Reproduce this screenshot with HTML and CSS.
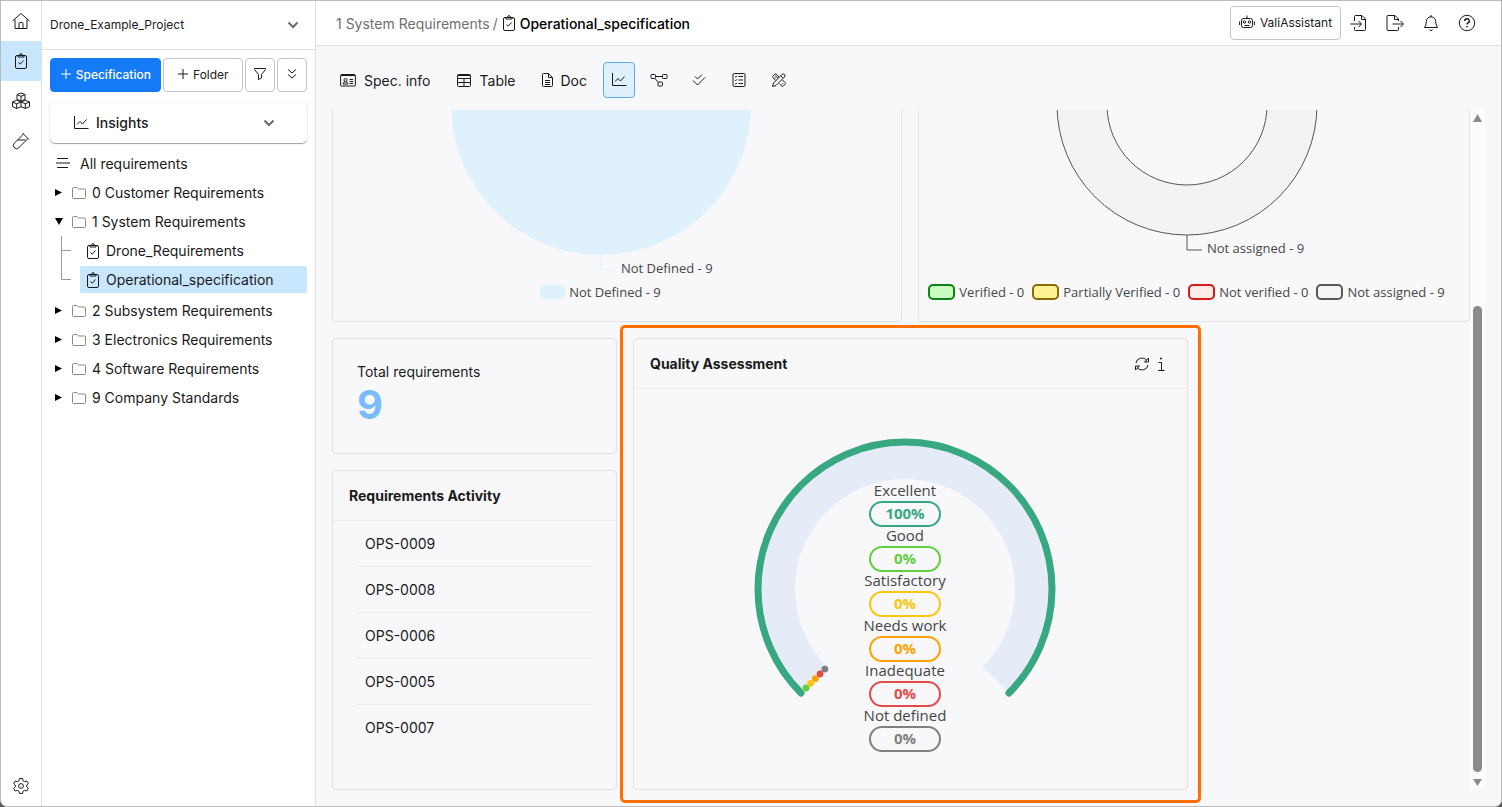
FILE: index.html
```html
<!DOCTYPE html>
<html lang="en">
<head>
    <meta charset="UTF-8">
    <meta name="viewport" content="width=device-width, initial-scale=1">
    <title>Operational_specification</title>
    <link rel="stylesheet" href="styles.css">
</head>
<body>
    <!-- icon sprite -->
    <svg class="sprite" aria-hidden="true">
        <symbol id="i-home" viewBox="0 0 18 18"><path d="M.500 9 9 1.500 17.500 9M3 7.500V16.500H15V7.500M7 16.500V11.500Q7 10.500 8 10.500H10Q11 10.500 11 11.500V16.500"/></symbol>
        <symbol id="i-clip" viewBox="0 0 16 16"><rect x="2.500" y="2.500" width="11" height="13" rx="1.500"/><path d="M5 4V2.500H6.500Q6.700.600 8 .600T9.500 2.500H11V4ZM5.500 9.500 7.200 11.200 10.500 7.500"/></symbol>
        <symbol id="i-boxes" viewBox="0 0 18 18"><path d="M9 1 13 2.500V7.500L9 9 5 7.500V2.500ZM5 2.700 9 4.300 13 2.700M9 4.300V8.700M4.700 8.200 9 10V14.700L4.700 16.500 .500 14.700V10ZM.500 10 4.700 11.800 9 10M4.700 11.800V16.500M13.300 8.200 17.500 10V14.700L13.300 16.500 9 14.700M9 10 13.300 8.200M9 10 13.300 11.800 17.500 10M13.300 11.800V16.500"/></symbol>
        <symbol id="i-tube" viewBox="0 0 18 18"><path d="M10.500 1 17 7.500M11.500 2 2.300 11.200A3.100 3.100 0 0 0 6.800 15.700L16 6.500M5.800 8H13.500"/></symbol>
        <symbol id="i-gear" viewBox="0 0 18 18"><circle cx="9" cy="9" r="2.400"/><path d="M7.500 1.500H10.500L11 3.700 12.600 4.600 14.800 4 16.300 6.600 14.700 8.100V9.900L16.300 11.400 14.800 14 12.600 13.400 11 14.300 10.500 16.500H7.500L7 14.300 5.400 13.400 3.200 14 1.700 11.400 3.300 9.900V8.100L1.700 6.600 3.200 4 5.400 4.600 7 3.700Z" stroke-linejoin="round"/></symbol>
        <symbol id="i-down" viewBox="0 0 12 8"><path d="M1.500 1.500 6 6 10.500 1.500" stroke-width="2"/></symbol>
        <symbol id="i-plus" viewBox="0 0 12 12"><path d="M6 1V11M1 6H11"/></symbol>
        <symbol id="i-filter" viewBox="0 0 14 14"><path d="M1.500 1.500H12.500V2.500L8.500 7.500V11L5.500 12.500V7.500L1.500 2.500Z"/></symbol>
        <symbol id="i-ddown" viewBox="0 0 14 14"><path d="M3 2.500 7 6 11 2.500M3 7.500 7 11 11 7.500"/></symbol>
        <symbol id="i-chart" viewBox="0 0 16 16"><path d="M1.500 1V13.500H15.500M4 9.500 7 6.500 9.500 9 13.500 4.500"/></symbol>
        <symbol id="i-lines" viewBox="0 0 14 12"><path d="M1 1.500H12M0 6H14M1 10.500H12"/></symbol>
        <symbol id="i-folder" viewBox="0 0 16 16"><path d="M1.500 3.500Q1.500 2.500 2.500 2.500H6L7.500 4H13.500Q14.500 4 14.500 5V12.500Q14.500 13.500 13.500 13.500H2.500Q1.500 13.500 1.500 12.500Z"/></symbol>
        <symbol id="i-right" viewBox="0 0 8 8"><path d="M0 0 7 3.500 0 7Z" fill="#000" stroke="none"/></symbol>
        <symbol id="i-open" viewBox="0 0 8 8"><path d="M0 0H8L4 7Z" fill="#000" stroke="none"/></symbol>
        <symbol id="i-mid" viewBox="0 0 10 29"><path d="M.500 0V29M.500 14.500H10"/></symbol>
        <symbol id="i-end" viewBox="0 0 10 29"><path d="M.500 0V14.500H10"/></symbol>
        <symbol id="i-robot" viewBox="0 0 16 16"><rect x="2.500" y="4.500" width="11" height="9" rx="2"/><path d="M8 1.500V4.500M.600 7.500V11M15.400 7.500V11M5.500 11.500H10.500"/><circle cx="5.500" cy="8" r="1.200"/><circle cx="10.500" cy="8" r="1.200"/></symbol>
        <symbol id="i-import" viewBox="0 0 18 18"><path d="M4.500 7V2.500Q4.500 1.500 5.500 1.500H12L15.500 5V15.500Q15.500 16.500 14.500 16.500H5.500Q4.500 16.500 4.500 15.500V13M11.500 1.500V5.500H15.500M.500 10H11.500M8.500 7 11.500 10 8.500 13"/></symbol>
        <symbol id="i-export" viewBox="0 0 18 18"><path d="M12.500 7V5L9 1.500H2Q1 1.500 1 2.500V15.500Q1 16.500 2 16.500H11.500Q12.500 16.500 12.500 15.500V13M8.500 1.500V5.500H12.500M6.500 10H17M14.500 7 17.500 10 14.500 13"/></symbol>
        <symbol id="i-bell" viewBox="0 0 18 18"><path d="M2.500 13.500Q4.300 11.500 4.300 7.500A4.700 4.700 0 0 1 13.700 7.500Q13.700 11.500 15.500 13.500ZM9 1V3M7.200 15.500A1.900 1.500 0 0 0 10.800 15.500"/></symbol>
        <symbol id="i-help" viewBox="0 0 18 18"><circle cx="9" cy="9" r="7.700"/><path d="M6.700 7A2.300 2.200 0 1 1 9.700 9.100Q9 9.500 9 10.600M9 12V13.400" stroke-width="1.400"/></symbol>
        <symbol id="i-card" viewBox="0 0 16 16"><rect x=".600" y="2.500" width="14.800" height="11.500" rx="1"/><path d="M1 3.500H15M9.500 7.500H13M9.500 9.500H13M9.500 11.500H13M3 12Q3.300 9.800 5.500 9.800T8 12Z"/><circle cx="5.500" cy="8" r="1.500"/></symbol>
        <symbol id="i-table" viewBox="0 0 16 16"><rect x="1.500" y="2.500" width="13" height="12" rx="1.200"/><path d="M1.500 3.500H14.500M1.500 6.500H14.500M1.500 10.500H14.500M8 6.500V14.500"/></symbol>
        <symbol id="i-doc" viewBox="1 0 16 16"><path d="M3.500 1.500H8.500L12.500 5.500V13.500Q12.500 14.500 11.500 14.500H3.500Q2.500 14.500 2.500 13.500V2.500Q2.500 1.500 3.500 1.500ZM8.500 1.500V5.500H12.500M5 8.500H10M5 10.500H10M5 12.500H10"/></symbol>
        <symbol id="i-nodes" viewBox="0 0 18 16"><rect x="1" y="2.500" width="4.500" height="4" rx=".800"/><rect x="12.500" y="2.500" width="4.500" height="4" rx=".800"/><rect x="8" y="10" width="4.500" height="4" rx=".800"/><path d="M5.500 4.500H12.500M5 6.500 8.500 10.500"/></symbol>
        <symbol id="i-checks" viewBox="0 0 16 16"><path d="M4 4.500 6.500 7 11 2.500M2 8.500 6.500 13 14 5.500"/></symbol>
        <symbol id="i-list" viewBox="0 0 16 16"><rect x="2" y="1.500" width="12" height="13" rx="1.200"/><path d="M7.500 4.500H12M7.500 8H12M7.500 11.500H12M4 4.500 4.800 5.200 6 3.800M4 8 4.800 8.700 6 7.300M4 11.500 4.800 12.200 6 10.800"/></symbol>
        <symbol id="i-tools" viewBox="0 0 16 16"><path d="M1.500 14.500 2.500 11 10.800 2.700Q12.300 1.200 13.500 2.500T13.300 5.200L5 13.500ZM10 4 12 6M7 6.300 4.200 3.500M4.800 8.500 1.800 5.500Q1.200 4.800 1.800 4.200L3.900 2.100Q4.500 1.500 5.200 2.100L8 5M3.200 6.500 4.500 5.200M8.500 12 11 14.300Q11.500 14.800 12.200 14.200L14.200 12.200Q14.800 11.500 14.200 10.800L11.500 8M11 12.500 12.300 11.200"/></symbol>
        <symbol id="i-refresh" viewBox="0 0 16 16"><path d="M2 7A6 5.500 0 0 1 13 4.500M14 9A6 5.500 0 0 1 3 11.500M14.500 2V6H10.500ZM1.500 14V10H5.500Z"/></symbol>
        <symbol id="i-info" viewBox="0 0 8 16"><path d="M1.500 6.500H4.500V14.500M1 14.500H7.500"/><circle cx="4" cy="2.500" r="1" fill="currentColor" stroke="none"/></symbol>
    </svg>

    <div class="app">
        <nav class="rail">
            <a href="#" aria-label="Home"><svg class="ic18"><use href="#i-home"/></svg></a>
            <a href="#" class="active" aria-label="Requirements"><svg class="ic16"><use href="#i-clip"/></svg></a>
            <a href="#" aria-label="Components"><svg class="ic18"><use href="#i-boxes"/></svg></a>
            <a href="#" aria-label="Tests"><svg class="ic18"><use href="#i-tube"/></svg></a>
            <a href="#" class="rail-bottom" aria-label="Settings"><svg class="ic18"><use href="#i-gear"/></svg></a>
        </nav>

        <aside class="sidebar">
            <div class="project">
                <select aria-label="Project">
                    <option>Drone_Example_Project</option>
                </select>
                <svg class="chevron"><use href="#i-down"/></svg>
            </div>
            <div class="side-actions">
                <button class="btn primary"><svg class="ic12"><use href="#i-plus"/></svg>Specification</button>
                <button class="btn folder-btn"><svg class="ic12"><use href="#i-plus"/></svg>Folder</button>
                <button class="btn small" aria-label="Filter"><svg class="ic14"><use href="#i-filter"/></svg></button>
                <button class="btn small" aria-label="Expand all"><svg class="ic14"><use href="#i-ddown"/></svg></button>
            </div>
            <button class="insights">
                <svg class="ic16"><use href="#i-chart"/></svg>
                <span>Insights</span>
                <svg class="chevron"><use href="#i-down"/></svg>
            </button>
            <a href="#" class="all-req"><svg class="lines"><use href="#i-lines"/></svg>All requirements</a>
            <ul class="tree">
                <li><a href="#" class="row"><svg class="tri"><use href="#i-right"/></svg><svg class="ic16 folder"><use href="#i-folder"/></svg>0 Customer Requirements</a></li>
                <li>
                    <a href="#" class="row"><svg class="tri"><use href="#i-open"/></svg><svg class="ic16 folder"><use href="#i-folder"/></svg>1 System Requirements</a>
                    <ul class="children">
                        <li><svg class="branch"><use href="#i-mid"/></svg><a href="#" class="spec"><svg class="ic16"><use href="#i-clip"/></svg>Drone_Requirements</a></li>
                        <li><svg class="branch"><use href="#i-end"/></svg><a href="#" class="spec selected"><svg class="ic16"><use href="#i-clip"/></svg>Operational_specification</a></li>
                    </ul>
                </li>
                <li><a href="#" class="row"><svg class="tri"><use href="#i-right"/></svg><svg class="ic16 folder"><use href="#i-folder"/></svg>2 Subsystem Requirements</a></li>
                <li><a href="#" class="row"><svg class="tri"><use href="#i-right"/></svg><svg class="ic16 folder"><use href="#i-folder"/></svg>3 Electronics Requirements</a></li>
                <li><a href="#" class="row"><svg class="tri"><use href="#i-right"/></svg><svg class="ic16 folder"><use href="#i-folder"/></svg>4 Software Requirements</a></li>
                <li><a href="#" class="row"><svg class="tri"><use href="#i-right"/></svg><svg class="ic16 folder"><use href="#i-folder"/></svg>9 Company Standards</a></li>
            </ul>
        </aside>

        <main class="main">
            <header class="topbar">
                <div class="crumbs">
                    <a href="#">1 System Requirements</a>
                    <span class="sep">/</span>
                    <svg class="ic16"><use href="#i-clip"/></svg>
                    <h1>Operational_specification</h1>
                </div>
                <div class="top-actions">
                    <button class="btn assistant"><svg class="ic16"><use href="#i-robot"/></svg>ValiAssistant</button>
                    <button class="icon-btn" aria-label="Import"><svg class="ic18"><use href="#i-import"/></svg></button>
                    <button class="icon-btn" aria-label="Export"><svg class="ic18"><use href="#i-export"/></svg></button>
                    <button class="icon-btn" aria-label="Notifications"><svg class="ic18"><use href="#i-bell"/></svg></button>
                    <button class="icon-btn" aria-label="Help"><svg class="ic18"><use href="#i-help"/></svg></button>
                </div>
            </header>

            <div class="toolbar">
                <button class="tab"><svg class="ic16"><use href="#i-card"/></svg>Spec. info</button>
                <button class="tab"><svg class="ic16"><use href="#i-table"/></svg>Table</button>
                <button class="tab tab-doc"><svg class="ic16"><use href="#i-doc"/></svg>Doc</button>
                <div class="views">
                    <button class="view active" aria-label="Insights"><svg class="ic16"><use href="#i-chart"/></svg></button>
                    <button class="view" aria-label="Traceability"><svg class="ic18"><use href="#i-nodes"/></svg></button>
                    <button class="view" aria-label="Verification"><svg class="ic16"><use href="#i-checks"/></svg></button>
                    <button class="view" aria-label="Checklist"><svg class="ic16"><use href="#i-list"/></svg></button>
                    <button class="view" aria-label="Tools"><svg class="ic16"><use href="#i-tools"/></svg></button>
                </div>
            </div>

            <div class="scroll-area">
                <div class="board">
                    <div class="charts">
                        <section class="card chart">
                            <svg class="pie" viewBox="0 0 400 326">
                                <circle cx="200" cy="151" r="150" fill="#dff1fc" stroke="none"/>
                                <path d="M200 301V316H214" stroke="#dff1fc"/>
                                <text x="220" y="319">Not Defined - 9</text>
                            </svg>
                            <ul class="legend">
                                <li><span class="swatch plain"></span>Not Defined - 9</li>
                            </ul>
                        </section>
                        <section class="card chart chart-verif">
                            <svg class="pie" viewBox="0 0 400 326">
                                <circle cx="200" cy="151" r="105" fill="none" stroke="#f3f3f5" stroke-width="50"/>
                                <circle cx="200" cy="151" r="130" stroke="#545458"/>
                                <circle cx="200" cy="151" r="80" stroke="#545458"/>
                                <path d="M200 281V296H215" stroke="#545458"/>
                                <text x="220" y="299">Not assigned - 9</text>
                            </svg>
                            <ul class="legend">
                                <li><span class="swatch verified"></span>Verified - 0</li>
                                <li><span class="swatch partial"></span>Partially Verified - 0</li>
                                <li><span class="swatch failed"></span>Not verified - 0</li>
                                <li><span class="swatch unassigned"></span>Not assigned - 9</li>
                            </ul>
                        </section>
                    </div>

                    <div class="widgets">
                        <div class="left-col">
                            <section class="card total">
                                <h2>Total requirements</h2>
                                <strong>9</strong>
                            </section>
                            <section class="card activity">
                                <h2 class="card-title">Requirements Activity</h2>
                                <ul>
                                    <li>OPS-0009</li>
                                    <li>OPS-0008</li>
                                    <li>OPS-0006</li>
                                    <li>OPS-0005</li>
                                    <li>OPS-0007</li>
                                </ul>
                            </section>
                        </div>

                        <section class="card quality">
                            <div class="card-title">
                                <h2>Quality Assessment</h2>
                                <button class="icon-btn" aria-label="Refresh"><svg class="ic16"><use href="#i-refresh"/></svg></button>
                                <button class="icon-btn" aria-label="Info"><svg class="info"><use href="#i-info"/></svg></button>
                            </div>
                            <div class="gauge">
                                <svg class="dial" viewBox="0 0 320 320">
                                    <path d="M68.100 251.900A130 130 0 1 1 251.900 251.900" stroke="#e5ebf7" stroke-width="40"/>
                                    <path d="M56 264A147 147 0 1 1 264 264" stroke="#37a880" stroke-width="7" stroke-linecap="round"/>
                                    <g stroke="none">
                                        <circle cx="61" cy="259" r="3.400" fill="#5fcf3f"/>
                                        <circle cx="65.700" cy="254.300" r="3.400" fill="#fcc60a"/>
                                        <circle cx="70.400" cy="249.600" r="3.400" fill="#ffa200"/>
                                        <circle cx="75.100" cy="244.900" r="3.400" fill="#e04c4c"/>
                                        <circle cx="79.900" cy="240.100" r="3.400" fill="#808080"/>
                                    </g>
                                </svg>
                                <dl class="scores">
                                    <dt>Excellent</dt><dd class="excellent">100%</dd>
                                    <dt>Good</dt><dd class="good">0%</dd>
                                    <dt>Satisfactory</dt><dd class="satisfactory">0%</dd>
                                    <dt>Needs work</dt><dd class="needs-work">0%</dd>
                                    <dt>Inadequate</dt><dd class="inadequate">0%</dd>
                                    <dt>Not defined</dt><dd class="not-defined">0%</dd>
                                </dl>
                            </div>
                            <div class="highlight"></div>
                        </section>
                    </div>
                </div>
                <div class="scrollbar">
                    <svg class="arrow" viewBox="0 0 15 15"><path d="M7.500 4 12 12H3Z"/></svg>
                    <div class="track"><div class="thumb"></div></div>
                    <svg class="arrow" viewBox="0 0 15 15"><path d="M3 4H12L7.500 11Z"/></svg>
                </div>
            </div>
        </main>
    </div>
</body>
</html>
```
FILE: styles.css
```css
* {
    box-sizing: border-box;
}

body {
    margin: 0;
    background-color: #55575a;
    color: #1a1a1a;
    font-family: Inter, "Liberation Sans", sans-serif;
    font-size: 14px;
}

h1, h2, ul, dl, dd {
    margin: 0;
    padding: 0;
}

h1, h2 {
    font-size: 14px;
}

ul {
    list-style: none;
}

a {
    color: inherit;
    text-decoration: none;
}

button, select {
    font-family: inherit;
    color: inherit;
    cursor: pointer;
}

svg {
    display: block;
    flex-shrink: 0;
    fill: none;
    stroke: currentColor;
}

.sprite {
    position: absolute;
    width: 0;
    height: 0;
}

.ic12 { width: 12px; height: 12px; }
.ic14 { width: 14px; height: 14px; }
.ic16 { width: 16px; height: 16px; }
.ic18 { width: 18px; height: 18px; }

.app {
    display: flex;
    height: 100vh;
    border: 1px solid #bcbcbc;
    border-radius: 0 0 7px 7px;
    background-color: #fff;
    overflow: hidden;
}

/* left icon rail */
.rail {
    display: flex;
    flex-direction: column;
    flex-shrink: 0;
    width: 41px;
    border-right: 1px solid #dedfe1;
}

.rail a {
    display: flex;
    align-items: center;
    justify-content: center;
    height: 40px;
}

.rail .active {
    background-color: #c9e6ff;
}

.rail .rail-bottom {
    margin-top: auto;
}

/* sidebar */
.sidebar {
    flex-shrink: 0;
    width: 274px;
    border-right: 1px solid #dedfe1;
}

.project {
    display: flex;
    align-items: center;
    height: 49px;
    padding: 0 16px 0 8px;
    border-bottom: 1px solid #dedfe1;
}

.project select {
    flex: 1;
    padding: 0 0 2px;
    border: none;
    background: none;
    appearance: none;
    font-size: 12px;
}

.chevron {
    width: 12px;
    height: 8px;
    color: #6b6b6b;
}

.side-actions {
    display: flex;
    gap: 2px;
    padding: 8px 8px 11px;
}

.btn {
    display: flex;
    align-items: center;
    justify-content: center;
    gap: 4px;
    height: 34px;
    padding: 0 0 2px;
    border: 1px solid #c4c4c6;
    border-radius: 4px;
    background-color: #fff;
    font-size: 12px;
}

.primary {
    flex: 111;
    border-color: #157af6;
    background-color: #157af6;
    color: #fff;
    font-weight: 500;
}

.folder-btn {
    flex: 80;
}

.small {
    width: 30px;
}

.insights {
    display: flex;
    align-items: center;
    width: 257px;
    height: 40px;
    margin: 0 8px;
    padding: 0 32px 0 23px;
    border: none;
    border-radius: 5px;
    background-color: #fff;
    box-shadow: 0 1px 1px rgba(0,0,0,0.35), 0 0 2px rgba(0,0,0,0.12);
    font-size: 14px;
    font-weight: 500;
}

.insights span {
    flex: 1;
    padding: 0 0 2px 7px;
    text-align: left;
}

.all-req {
    display: flex;
    align-items: center;
    gap: 10px;
    height: 30px;
    margin-top: 5px;
    padding-left: 14px;
}

.lines {
    width: 14px;
    height: 12px;
}

.row {
    display: flex;
    align-items: center;
    height: 29px;
    padding-left: 13px;
}

.tri {
    width: 8px;
    height: 8px;
}

.folder {
    margin: 0 5px 0 8px;
    color: #8a8a8a;
}

.children {
    padding: 0 8px 2px 19px;
}

.children li {
    display: flex;
    align-items: center;
    gap: 9px;
    height: 29px;
}

.branch {
    width: 10px;
    height: 29px;
    color: #999;
}

.spec {
    display: flex;
    flex: 1;
    align-items: center;
    gap: 5px;
    height: 27px;
    padding-left: 5px;
    border-radius: 2px;
}

.selected {
    background-color: #c9e6ff;
}

/* main area */
.main {
    display: flex;
    flex: 1;
    flex-direction: column;
    min-width: 0;
    background-color: #f8f8fa;
}

.topbar {
    display: flex;
    flex-shrink: 0;
    align-items: center;
    justify-content: space-between;
    height: 45px;
    padding: 0 25px 0 20px;
    border-bottom: 1px solid #dedfe1;
    background-color: #fff;
}

.crumbs {
    display: flex;
    align-items: center;
    gap: 3px;
}

.crumbs a, .sep {
    color: #6f7072;
}

.crumbs h1 {
    color: #000;
    font-weight: 500;
}

.top-actions {
    display: flex;
    align-items: center;
    gap: 18px;
}

.assistant {
    gap: 5px;
    width: 111px;
    margin-right: -9px;
}

.icon-btn {
    padding: 0;
    border: none;
    background: none;
}

.toolbar {
    display: flex;
    flex-shrink: 0;
    align-items: center;
    height: 64px;
    padding: 4px 24px 0;
}

.tab {
    display: flex;
    align-items: center;
    gap: 8px;
    margin-right: 25px;
    padding: 0;
    border: none;
    background: none;
    font-size: 14px;
}

.tab-doc {
    gap: 4px;
    margin-right: 16px;
}

.views {
    display: flex;
    gap: 8px;
}

.view {
    display: flex;
    align-items: center;
    justify-content: center;
    width: 32px;
    height: 36px;
    padding: 0;
    border: 1px solid transparent;
    border-radius: 4px;
    background: none;
}

.view.active {
    border-color: #5aa9f8;
    background-color: #dff1fe;
}

.scroll-area {
    display: flex;
    flex: 1;
    min-height: 0;
    padding: 0 16px;
    overflow: hidden;
}

/* scrolled to the end, so the first row runs out of the top */
.board {
    display: flex;
    flex: 1;
    flex-direction: column;
    justify-content: flex-end;
    gap: 16px;
    min-width: 0;
    padding-bottom: 16px;
}

.card {
    border: 1px solid #e2e2e4;
    border-radius: 4px;
}

.charts {
    display: grid;
    flex-shrink: 0;
    grid-template-columns: 570fr 552fr;
    gap: 16px;
}

.chart {
    display: flex;
    flex-direction: column;
    align-items: center;
    padding: 32px 33px 18px 0;
    color: #464646;
    font-family: "Open Sans", "Noto Sans", sans-serif;
    font-size: 13px;
}

.chart-verif {
    padding-right: 15px;
}

.pie {
    width: 400px;
    height: 326px;
}

.pie text {
    fill: #464646;
    stroke: none;
}

.legend {
    display: flex;
    gap: 8px;
}

.legend li {
    display: flex;
    align-items: center;
    gap: 4px;
    height: 23px;
    line-height: 20px;
    white-space: nowrap;
}

.swatch {
    width: 27px;
    height: 16px;
    border: 2px solid;
    border-radius: 5px;
}

.plain {
    width: 25px;
    height: 14px;
    border-color: #dff1fc;
    background-color: #dff1fc;
}

.verified {
    border-color: #0a8414;
    background-color: #ccfbc0;
}

.partial {
    border-color: #8a6a05;
    background-color: #fff293;
}

.failed {
    border-color: #d81a1a;
    background-color: #ffece9;
}

.unassigned {
    border-color: #58585b;
    background-color: #f5f5f7;
}

.widgets {
    display: grid;
    flex-shrink: 0;
    grid-template-columns: 285fr 555fr 266fr;
    gap: 16px;
}

.left-col {
    display: flex;
    flex-direction: column;
    gap: 16px;
}

.total {
    height: 116px;
    padding: 24px;
}

.total h2 {
    font-weight: 400;
    line-height: 18px;
}

.total strong {
    display: block;
    color: #7bbcff;
    font-size: 40px;
    line-height: 48px;
}

.card-title {
    display: flex;
    align-items: center;
    height: 50px;
    padding: 0 16px;
    border-bottom: 1px solid #ebebed;
    font-weight: 700;
}

.card-title h2 {
    flex: 1;
    font-weight: 700;
}

.activity {
    flex: 1;
}

.activity ul {
    padding: 0 24px 38px;
}

.activity li {
    height: 46px;
    padding-left: 8px;
    border-bottom: 1px solid #ebebed;
    line-height: 46px;
}

.activity li:last-child {
    border-bottom: none;
}

.quality {
    position: relative;
    height: 452px;
}

.quality .card-title {
    gap: 7px;
    padding-right: 22px;
}

.info {
    width: 8px;
    height: 16px;
}

/* dial and scores share one cell, the scores sit on top */
.gauge {
    display: grid;
    justify-content: center;
    padding-right: 11px;
}

.dial, .scores {
    grid-area: 1 / 1;
}

.dial {
    width: 320px;
    height: 320px;
    margin-top: 40px;
}

.scores {
    justify-self: center;
    padding-top: 93px;
    color: #464646;
    font-family: "Open Sans", "Noto Sans", sans-serif;
    font-size: 15px;
    text-align: center;
}

.scores dt {
    margin-bottom: 3px;
    line-height: 16px;
}

.scores dd {
    width: 72px;
    height: 26px;
    margin: 0 auto;
    border: 2px solid;
    border-radius: 13px;
    font-weight: 700;
    line-height: 20px;
}

.excellent { color: #37a880; }
.good { color: #5fcf3f; }
.satisfactory { color: #fcc60a; }
.needs-work { color: #ffa200; }
.inadequate { color: #e04c4c; }
.not-defined { color: #808080; }

.highlight {
    position: absolute;
    inset: -14px;
    border: 3px solid #ff6f00;
    border-radius: 5px;
    pointer-events: none;
}

.scrollbar {
    display: flex;
    flex-direction: column;
    width: 15px;
    margin-bottom: 16px;
    background-color: #fcfcfc;
}

.arrow {
    width: 15px;
    height: 15px;
}

.arrow path {
    fill: #8b8b8b;
    stroke: none;
}

.track {
    display: flex;
    flex: 1;
    flex-direction: column;
    justify-content: flex-end;
    padding: 0 3px 3px;
}

.thumb {
    height: 72%;
    border-radius: 5px;
    background-color: #8b8b8b;
}
```
